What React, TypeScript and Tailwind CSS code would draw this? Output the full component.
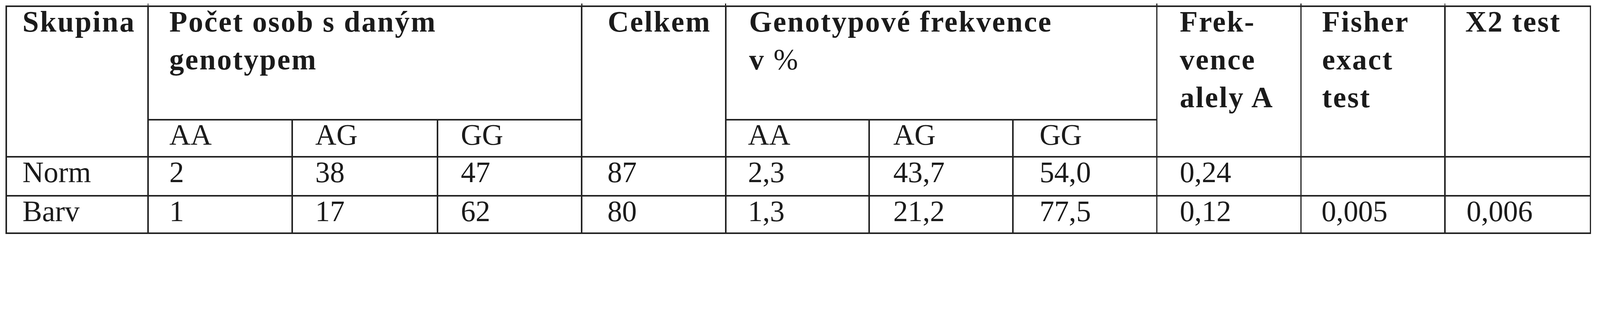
// measured on the 5339px reference, laid out here at 4096/5339 scale
const pads = [
  'pl-[39.9px]',
  'pl-[52.2px]',
  'pl-[56.8px]',
  'pl-[57.5px]',
  'pl-[63.7px]',
  'pl-[55.2px]',
  'pl-[59.8px]',
  'pl-[66px]',
  'pl-[56.8px]',
  'pl-[50.6px]',
  'pl-[53.7px]',
]

const rows = [
  ['Norm', '2', '38', '47', '87', '2,3', '43,7', '54,0', '0,24', '', ''],
  ['Barv', '1', '17', '62', '80', '1,3', '21,2', '77,5', '0,12', '0,005', '0,006'],
]

// little stub of the vertical rule poking above the top border
const tick =
  "relative before:absolute before:content-[''] before:-top-[8.4px] before:-left-[3.1px] before:h-[6.1px] before:w-[2.3px] before:bg-[#232323]"

function Text({ children, className = '' }: { children: React.ReactNode; className?: string }) {
  return <div className={`leading-[96.7px] whitespace-nowrap ${className}`}>{children}</div>
}

export default function App() {
  return (
    <div className="bg-white pt-[13.8px] pl-[13.8px] font-['Liberation_Serif','Times_New_Roman',serif] text-[75.2px] text-[#1b1b1b]">
      <div className="grid w-fit grid-cols-[359.8px_365.2px_368.2px_365.2px_364.4px_363.6px_364.4px_364.4px_365.2px_364.4px_369px] grid-rows-[287.7px_91.3px_95.9px_92.1px] gap-[3.84px] bg-[#232323] p-[3.84px]">
        {/* header */}
        <div className={`row-span-2 bg-white ${pads[0]}`}>
          <Text className="-mt-[9.2px] font-bold tracking-[3.07px]">Skupina</Text>
        </div>
        <div className={`col-span-3 bg-white ${pads[1]} ${tick}`}>
          <Text className="-mt-[9.2px] font-bold tracking-[3.07px]">
            Počet osob s daným
            <br />
            genotypem
          </Text>
        </div>
        <div className={`row-span-2 bg-white pl-[64.4px] ${tick}`}>
          <Text className="-mt-[9.2px] font-bold tracking-[3.07px]">Celkem</Text>
        </div>
        <div className={`col-span-3 bg-white pl-[58.3px] ${tick}`}>
          <Text className="-mt-[9.2px] font-bold tracking-[3.07px]">
            Genotypové frekvence
            <br />
            v <span className="font-normal tracking-normal">%</span>
          </Text>
        </div>
        <div className={`row-span-2 bg-white ${pads[8]} ${tick}`}>
          <Text className="-mt-[9.2px] font-bold tracking-[3.07px]">
            Frek-
            <br />
            vence
            <br />
            alely A
          </Text>
        </div>
        <div className={`row-span-2 bg-white pl-[52.2px] ${tick}`}>
          <Text className="-mt-[9.2px] font-bold tracking-[3.07px]">
            Fisher
            <br />
            exact
            <br />
            test
          </Text>
        </div>
        <div className={`row-span-2 bg-white pl-[50.6px] ${tick}`}>
          <Text className="-mt-[9.2px] font-bold tracking-[3.07px]">X2 test</Text>
        </div>

        {/* genotype sub-header */}
        {['AA', 'AG', 'GG'].map((g, i) => (
          <div key={'a' + g} className={`bg-white ${pads[1 + i]}`}>
            <Text className="-mt-[10.7px]">{g}</Text>
          </div>
        ))}
        {['AA', 'AG', 'GG'].map((g, i) => (
          <div key={'b' + g} className={`bg-white ${pads[5 + i]}`}>
            <Text className="-mt-[10.7px]">{g}</Text>
          </div>
        ))}

        {/* data */}
        {rows.map((r) =>
          r.map((v, i) => (
            <div key={r[0] + i} className={`bg-white ${pads[i]}`}>
              <Text className="-mt-[10px]">{v}</Text>
            </div>
          )),
        )}
      </div>
    </div>
  )
}
